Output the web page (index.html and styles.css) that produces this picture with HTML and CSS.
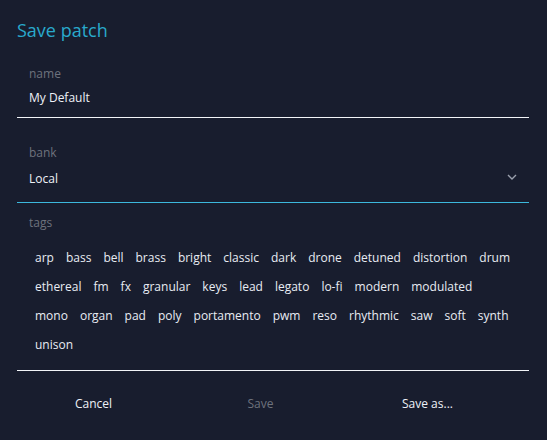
FILE: index.html
```html
<!DOCTYPE html>
<html>
<head>
<meta charset="utf-8">
<link rel="stylesheet" href="styles.css">
</head>
<body>
<div class="dialog">
  <h2 class="title">Save patch</h2>
  <div class="field field-name">
    <div class="label">name</div>
    <div class="value">My Default</div>
  </div>
  <div class="field field-bank">
    <div class="label">bank</div>
    <div class="value select">
      <span>Local</span>
      <svg class="chev" width="10" height="6" viewBox="0 0 10 6"><path d="M1 1 L5 5 L9 1" fill="none" stroke="#9aa0ad" stroke-width="1.4"/></svg>
    </div>
  </div>
  <div class="field field-tags">
    <div class="label">tags</div>
    <div class="tags">
      <span class="tag">arp</span><span class="tag">bass</span><span class="tag">bell</span><span class="tag">brass</span><span class="tag">bright</span><span class="tag">classic</span><span class="tag">dark</span><span class="tag">drone</span><span class="tag">detuned</span><span class="tag">distortion</span><span class="tag">drum</span>
      <span class="tag">ethereal</span><span class="tag">fm</span><span class="tag">fx</span><span class="tag">granular</span><span class="tag">keys</span><span class="tag">lead</span><span class="tag">legato</span><span class="tag">lo-fi</span><span class="tag">modern</span><span class="tag">modulated</span>
      <span class="tag">mono</span><span class="tag">organ</span><span class="tag">pad</span><span class="tag">poly</span><span class="tag">portamento</span><span class="tag">pwm</span><span class="tag">reso</span><span class="tag">rhythmic</span><span class="tag">saw</span><span class="tag">soft</span><span class="tag">synth</span>
      <span class="tag">unison</span>
    </div>
  </div>
  <div class="actions">
    <button class="btn">Cancel</button>
    <button class="btn disabled">Save</button>
    <button class="btn">Save as...</button>
  </div>
</div>
</body>
</html>
```
FILE: styles.css
```css
html, body {
  margin: 0;
  padding: 0;
  background: #181d2e;
}
body {
  font-family: "Open Sans", "Noto Sans", sans-serif;
  color: #e8ecf3;
  width: 547px;
  height: 440px;
  overflow: hidden;
}
.dialog {
  padding: 0 18px 0 17px;
}
.title {
  margin: 0;
  padding-top: 17px;
  height: 47px;
  font-size: 18px;
  font-weight: 400;
  line-height: 26px;
  color: #29a9cc;
}
.field {
  padding-left: 12px;
  border-bottom: 1px solid #f2f4f8;
}
.label {
  font-size: 12px;
  line-height: 18px;
  color: #6e727d;
}
.field-name {
  height: 52px;
}
.field-name .label {
  margin-top: 1px;
}
.value {
  font-size: 12px;
  line-height: 18px;
  color: #eef1f7;
  margin-top: 6px;
}
.field-bank {
  height: 58px;
  padding-top: 26px;
  border-bottom-color: #3cb8dc;
}
.field-bank .value {
  margin-top: 8px;
}
.select {
  display: flex;
  justify-content: space-between;
  align-items: center;
  padding-right: 12px;
}
.chev {
  margin-top: -4px;
}
.field-tags {
  height: 156px;
  padding-top: 11px;
}
.tags {
  display: flex;
  flex-wrap: wrap;
  column-gap: 12px;
  padding-left: 6px;
  padding-right: 16px;
  margin-top: 11px;
}
.tag {
  font-size: 12px;
  line-height: 29px;
  color: #e8ecf3;
}
.actions {
  display: grid;
  grid-template-columns: 153px 153px 153px;
  column-gap: 14px;
  padding-top: 24px;
}
.btn {
  background: none;
  border: none;
  font-family: "Open Sans", "Noto Sans", sans-serif;
  font-size: 12px;
  line-height: 18px;
  color: #eef1f7;
  padding: 0;
  text-align: center;
}
.btn.disabled {
  color: #6e727d;
}
```
